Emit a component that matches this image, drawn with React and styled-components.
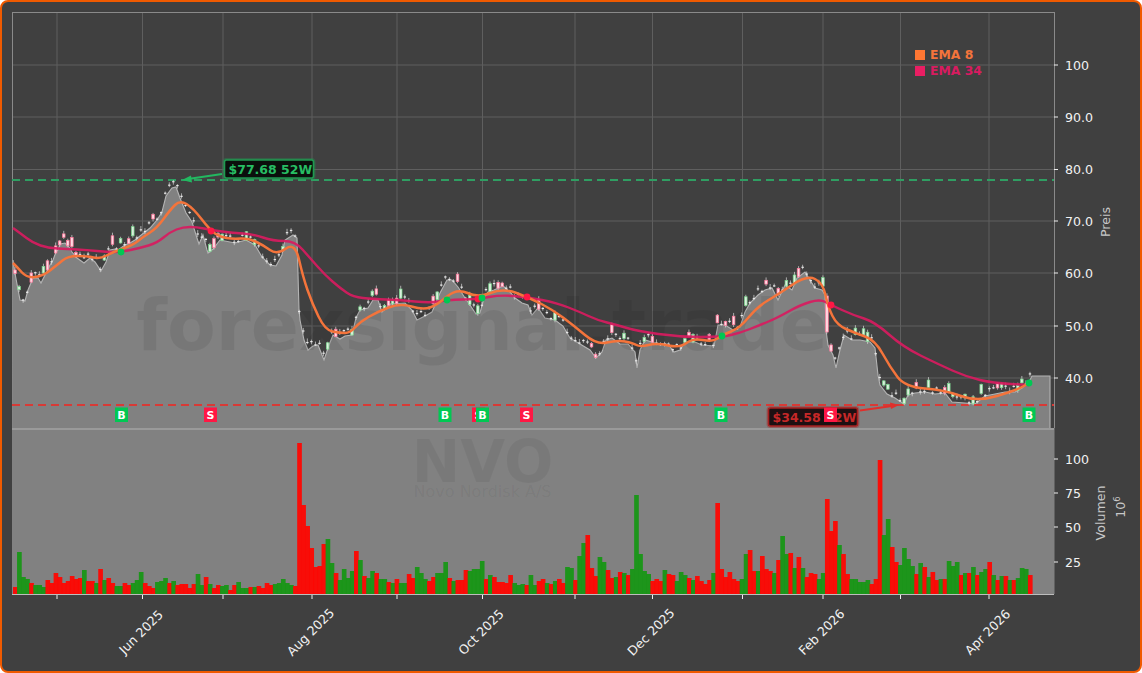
import React from 'react';
import styled, { createGlobalStyle } from 'styled-components';

const GlobalStyle = createGlobalStyle`
  html, body { margin: 0; padding: 0; background: #fff; }
  body { font-family: "DejaVu Sans", sans-serif; }
`;

const Frame = styled.div`
  width: 1142px;
  height: 673px;
  box-sizing: border-box;
  border: 2px solid #f05a00;
  border-radius: 8px;
  background: #404040;
  overflow: hidden;
  display: flex;
  flex-direction: column;
`;

const Panel = styled.svg`
  display: block;
  flex: none;
  width: 1138px;
  height: ${(p) => p.$height}px;
`;

const TickLabel = styled.text`
  font-family: "DejaVu Sans", sans-serif;
  font-size: 12.6px;
  fill: #f2f2f2;
  dominant-baseline: central;
`;

const AxisTitle = styled.text`
  font-family: "DejaVu Sans", sans-serif;
  font-size: 12.6px;
  fill: #c8c8c8;
  text-anchor: middle;
`;

const Watermark = styled.text`
  font-family: "DejaVu Sans", sans-serif;
  font-weight: ${(p) => (p.$light ? 400 : 700)};
  font-size: ${(p) => p.$size}px;
  fill: rgba(0, 0, 0, ${(p) => p.$alpha});
  text-anchor: middle;
`;

const LegendText = styled.text`
  font-family: "DejaVu Sans", sans-serif;
  font-weight: 700;
  font-size: 12.4px;
  fill: ${(p) => p.$color};
`;

const PriceTag = styled.text`
  font-family: "DejaVu Sans", sans-serif;
  font-weight: 700;
  font-size: 12.5px;
  fill: ${(p) => p.$color};
`;

const SignalLetter = styled.text`
  font-family: "DejaVu Sans", sans-serif;
  font-weight: 700;
  font-size: 11px;
  fill: #fff;
  text-anchor: middle;
`;

const GRID_X = [57, 142.5, 223, 312, 397, 482.5, 575, 652.5, 742.5, 823, 900.5, 989];
const PRICE_TICKS = [['100', 65], ['90.0', 117], ['80.0', 169.5], ['70.0', 221], ['60.0', 273], ['50.0', 326], ['40.0', 378]];
const VOLUME_TICKS = [['100', 459], ['75', 493], ['50', 527], ['25', 562]];
const MONTHS = [['Jun 2025', 142.5], ['Aug 2025', 312], ['Oct 2025', 482.5], ['Dec 2025', 652.5], ['Feb 2026', 823], ['Apr 2026', 989]];

// close line, read off the picture as [x, y]
const CLOSE = [[13,260],[14,268],[20,300],[25,301],[28,290],[33,278],[38,278],[41,283],[45,275],[50,265],[53,260],[56,252],[58,250],[60,244],[65,243],[70,248],[72,252],[77,258],[84,263],[90,258],[95,262],[101,271],[106,262],[110,250],[115,249],[118,250],[125,245],[130,243],[135,240],[145,232],[150,228],[157,220],[162,212],[166,196],[172,188],[176,187],[180,198],[186,213],[192,222],[197,238],[199,244],[203,235],[207,250],[208,253],[213,249],[220,240],[235,243],[246,240],[255,245],[262,257],[270,265],[276,266],[282,255],[285,240],[293,235],[297,238],[299,310],[300,320],[304,340],[308,350],[313,346],[318,345],[324,360],[329,345],[333,335],[340,339],[345,336],[352,335],[356,318],[360,310],[368,308],[373,300],[378,300],[382,312],[390,304],[405,303],[412,310],[417,320],[425,316],[432,312],[440,293],[447,280],[452,280],[458,287],[465,298],[470,305],[476,314],[480,313],[484,298],[488,292],[494,290],[503,286],[510,292],[515,298],[522,303],[528,305],[532,315],[538,308],[545,318],[555,320],[563,326],[570,338],[580,344],[590,350],[596,358],[602,352],[606,340],[612,338],[620,344],[628,344],[635,352],[637,368],[640,350],[645,340],[652,342],[660,345],[668,344],[674,352],[680,350],[685,342],[695,342],[702,345],[714,346],[718,325],[725,325],[733,330],[740,327],[745,312],[750,303],[758,295],[765,290],[772,288],[778,300],[785,285],[792,290],[797,278],[805,272],[810,280],[815,288],[822,290],[825,295],[826,330],[828,345],[833,355],[836,368],[840,350],[844,335],[852,340],[860,340],[870,342],[875,348],[878,375],[880,385],[887,394],[895,398],[904,404],[908,395],[915,393],[925,392],[935,394],[945,393],[952,402],[965,403],[975,404],[985,396],[995,394],[1005,392],[1015,392],[1022,388],[1030,380],[1032,376]];

const EMA34 = [[13,228],[20,233],[33,243],[48,248],[67,249],[87,250],[107,252],[121,252],[140,248],[157,243],[170,232],[183,227],[197,227],[211,230],[233,233],[253,234],[273,241],[295,241],[310,258],[325,275],[340,288],[353,297],[373,299],[400,300],[430,303],[447,300],[478,299],[500,295],[527,297],[557,303],[580,312],[597,320],[617,325],[637,331],[680,337],[722,337],[740,333],[760,325],[777,318],[800,305],[820,299],[831,305],[853,315],[875,322],[903,347],[940,365],[967,377],[993,383],[1029,385]];

const EMA8 = [[13,263],[17,267],[27,278],[43,276],[57,265],[68,256],[87,256],[100,259],[113,252],[133,245],[143,237],[157,228],[170,210],[180,200],[193,208],[210,230],[220,237],[233,239],[248,238],[263,245],[277,255],[295,242],[303,277],[312,303],[325,330],[340,333],[350,333],[360,322],[377,312],[400,303],[423,310],[437,305],[457,288],[478,298],[503,288],[530,298],[553,310],[573,325],[597,345],[617,340],[633,343],[640,347],[657,343],[680,348],[693,338],[713,342],[722,335],[740,328],[757,307],[777,295],[807,275],[823,283],[828,307],[837,325],[855,333],[875,340],[890,367],[905,387],[945,390],[977,402],[1017,390],[1029,383]];

// volume bar heights in px, positive = up day, negative = down day
const VOLUME = [-7,42,17,15,-11,9,9,7,-14,-11,-21,-17,-11,-13,-18,-15,-16,24,-13,-13,11,-25,14,-16,-11,8,8,-11,-9,11,14,22,-11,-8,-6,12,13,16,-11,13,-9,-10,-10,-6,-10,20,9,-17,10,-6,-9,8,9,-4,-9,12,6,6,-7,7,-8,-6,-11,-9,10,11,15,11,9,-8,-151,-89,-68,-46,-27,-28,-50,55,31,-21,14,25,16,23,-43,34,-18,16,23,-21,15,15,-12,11,-15,11,11,-20,-16,27,21,15,-13,-17,21,21,32,-16,13,-14,-14,-24,23,25,25,33,-15,19,-17,-12,-12,-11,-19,11,9,10,-9,19,9,-13,-15,11,-10,13,-15,-11,27,26,-14,38,51,-59,-26,-18,37,32,-24,-16,17,-22,21,-19,25,99,40,23,20,-13,-15,-13,24,-20,-19,13,22,19,-16,14,-18,-13,-10,-14,21,-91,-25,-17,-22,-15,-13,15,40,-44,-23,23,-38,-25,-23,21,-34,58,40,-41,26,-37,26,-17,-21,-20,15,21,-95,-63,-73,49,-40,-20,15,15,12,12,14,-10,-15,-134,59,75,-47,-32,29,46,35,28,-20,31,-27,17,-22,-14,15,-15,33,28,32,-19,21,-21,27,-19,22,25,-32,19,-14,18,-18,14,-14,16,26,25,-19];

const BAR_STEP = (1032 - 13) / VOLUME.length;

const yAt = (x) => {
  for (let i = 1; i < CLOSE.length; i++) {
    if (x <= CLOSE[i][0]) {
      const [x0, y0] = CLOSE[i - 1];
      const [x1, y1] = CLOSE[i];
      return y0 + ((y1 - y0) * (x - x0)) / (x1 - x0 || 1);
    }
  }
  return CLOSE[CLOSE.length - 1][1];
};

const noise = (i) => {
  const s = Math.sin(i * 127.1 + 11.7) * 43758.5453;
  return s - Math.floor(s);
};

const CANDLES = VOLUME.map((v, i) => {
  const x = 13 + (i + 0.5) * BAR_STEP;
  const c = yAt(x);
  const r = noise(i);
  const up = v > 0;
  const gap = x > 824 && x < 829;
  const h = gap ? 36 : r > 0.68 ? 3 + (r - 0.68) * 20 : 1.2;
  // most candles sit on the line, the odd one pokes out above it
  const lift = noise(i + 900) > 0.55 ? 3 + noise(i + 900) * 3 : 0;
  const top = gap ? 296 : c - h - lift;
  return { x, up, top, h, plain: h < 2, hi: top - 0.5 - noise(i + 300) * 3, lo: top + h + 0.5 + noise(i + 600) * 2 };
});

const smooth = (pts) => {
  let d = `M${pts[0][0]} ${pts[0][1]}`;
  for (let i = 1; i < pts.length - 1; i++) {
    const mx = (pts[i][0] + pts[i + 1][0]) / 2;
    const my = (pts[i][1] + pts[i + 1][1]) / 2;
    d += ` Q${pts[i][0]} ${pts[i][1]} ${mx} ${my}`;
  }
  const last = pts[pts.length - 1];
  return `${d} L${last[0]} ${last[1]}`;
};

const linePoints = CLOSE.map((p) => p.join(',')).join(' ');

const SIGNALS = [
  ['B', 121.5], ['S', 210.5], ['B', 445], ['S', 478.5], ['B', 482.5], ['S', 526.5], ['B', 721], ['B', 1029],
];
const DOTS = [[121, 252, 1], [211, 231, 0], [447, 300, 1], [478, 299, 0], [482, 298, 1], [527, 297, 0], [722, 336, 1], [831, 305, 0], [1029, 383, 1]];

const Signal = ({ kind, x }) => (
  <g>
    <rect x={x - 6.5} y={407.5} width={13} height={14.5} fill={kind === 'B' ? '#00c853' : '#ff1744'} />
    <SignalLetter x={x} y={419}>{kind}</SignalLetter>
  </g>
);

const Extreme = ({ x, y, w, color, box, border, text }) => (
  <g>
    <rect x={x - 1} y={y - 1} width={w + 2} height={20} rx={3} fill="none" stroke={border} strokeOpacity={0.35} strokeWidth={2} />
    <rect x={x} y={y} width={w} height={18} rx={2} fill={box} stroke={border} strokeWidth={1.6} />
    <PriceTag $color={color} x={x + 4} y={y + 13.5}>{text}</PriceTag>
  </g>
);

const PriceChart = () => (
  <Panel $height={426} viewBox="2 2 1138 426">
    {GRID_X.map((x) => <line key={x} x1={x} x2={x} y1={13} y2={428} stroke="#5f5f5f" strokeWidth={1} />)}
    {PRICE_TICKS.map(([t, y]) => <line key={t} x1={12} x2={1054} y1={y} y2={y} stroke="#5f5f5f" strokeWidth={1} />)}
    <rect x={12.5} y={12.5} width={1042} height={416} fill="none" stroke="#8a8a8a" strokeWidth={1} />

    <polygon points={`12.5,428 ${linePoints} 1050,376 1050,428`} fill="#818181" />
    <polyline points={`${linePoints} 1050,376 1050,428`} fill="none" stroke="#b4b4b4" strokeWidth={1.1} />
    <Watermark $alpha={0.07} $size={71} x={482} y={350}>forexsignal.trade</Watermark>

    <line x1={12} x2={1054} y1={180} y2={180} stroke="#2f9e62" strokeWidth={2} strokeDasharray="8 5" />
    <line x1={12} x2={1054} y1={405} y2={405} stroke="#d83a36" strokeWidth={2} strokeDasharray="8 5" />

    {CANDLES.map((c, i) => (
      <g key={i}>
        <line x1={c.x} x2={c.x} y1={c.hi} y2={c.lo} stroke="#dedede" strokeOpacity={0.85} strokeWidth={0.8} />
        {c.plain ? (
          <rect x={c.x - 1.2} y={c.top} width={2.4} height={c.h} fill="#e8e8e8" />
        ) : (
          <rect x={c.x - 1.3} y={c.top} width={2.6} height={c.h} fill={c.up ? '#dcefde' : '#ffd9e2'} stroke={c.up ? '#7ad98e' : '#ff7599'} strokeWidth={0.7} />
        )}
      </g>
    ))}

    <path d={smooth(EMA34)} fill="none" stroke="#d81b60" strokeOpacity={0.92} strokeWidth={2.4} strokeLinejoin="round" />
    <path d={smooth(EMA8)} fill="none" stroke="#f4743b" strokeWidth={2.5} strokeLinejoin="round" />
    {DOTS.map(([x, y, up]) => <circle key={x} cx={x} cy={y} r={3.4} fill={up ? '#00c853' : '#ff1744'} />)}

    <line x1={222} x2={188} y1={174} y2={179} stroke="#22b860" strokeWidth={2} />
    <polygon points="182,180 191,175.5 192,182.5" fill="#22b860" />
    <Extreme x={224.5} y={160} w={89} color="#27bd63" box="#0b0f0c" border="#1f9a50" text="$77.68 52W" />

    <Extreme x={768.5} y={408} w={89} color="#c62828" box="#1d1012" border="#a81f1f" text="$34.58 52W" />
    <line x1={860} x2={892} y1={410.5} y2={406} stroke="#e02f2b" strokeWidth={2} />
    <polygon points="899,405 890,402.5 891,409" fill="#e02f2b" />

    {SIGNALS.map(([kind, x]) => <Signal key={x} kind={kind} x={x} />)}
    <Signal kind="S" x={830.5} />

    <rect x={915} y={50} width={10} height={10} fill="#ff7733" />
    <LegendText $color="#f4743b" x={930} y={58.5}>EMA 8</LegendText>
    <rect x={915} y={66} width={10} height={10} fill="#e91e63" />
    <LegendText $color="#d81b60" x={930} y={74.5}>EMA 34</LegendText>

    {PRICE_TICKS.map(([t, y]) => (
      <g key={t}>
        <line x1={1054} x2={1058} y1={y} y2={y} stroke="#eee" />
        <TickLabel x={1065} y={y}>{t}</TickLabel>
      </g>
    ))}
    <AxisTitle x={1106} y={222} dy={4} transform="rotate(-90 1106 222)">Preis</AxisTitle>
  </Panel>
);

const VolumeChart = () => (
  <Panel $height={243} viewBox="2 428 1138 243">
    <rect x={12} y={428} width={1042.5} height={166} fill="#818181" />
    <line x1={12} x2={1054} y1={429} y2={429} stroke="#9a9a9a" strokeWidth={2} />
    <Watermark $alpha={0.055} $size={58} x={482.5} y={482}>NVO</Watermark>
    <Watermark $alpha={0.055} $light $size={16} x={482.5} y={497}>Novo Nordisk A/S</Watermark>

    {VOLUME.map((v, i) => (
      <rect
        key={i}
        x={13 + i * BAR_STEP}
        y={594 - Math.abs(v)}
        width={BAR_STEP + 0.6}
        height={Math.abs(v)}
        fill={v > 0 ? '#169614' : '#ff0500'}
        fillOpacity={0.94}
      />
    ))}
    <line x1={12} x2={1054} y1={594.5} y2={594.5} stroke="#bdbdbd" strokeWidth={1} />

    {GRID_X.map((x) => <line key={x} x1={x} x2={x} y1={595} y2={599} stroke="#eee" />)}
    {MONTHS.map(([label, x]) => (
      <TickLabel key={label} x={x - 1.5} y={632} textAnchor="middle" transform={`rotate(-45 ${x - 1.5} 632)`}>{label}</TickLabel>
    ))}

    {VOLUME_TICKS.map(([t, y]) => (
      <g key={t}>
        <line x1={1054} x2={1058} y1={y} y2={y} stroke="#eee" />
        <TickLabel x={1065} y={y}>{t}</TickLabel>
      </g>
    ))}
    <AxisTitle x={1101} y={513} dy={4} transform="rotate(-90 1101 513)">Volumen</AxisTitle>
    <AxisTitle x={1121} y={507} dy={4} transform="rotate(-90 1121 507)">
      10<tspan fontSize="8.5" dy={-5}>6</tspan>
    </AxisTitle>
  </Panel>
);

export default function App() {
  return (
    <>
      <GlobalStyle />
      <Frame>
        <PriceChart />
        <VolumeChart />
      </Frame>
    </>
  );
}
